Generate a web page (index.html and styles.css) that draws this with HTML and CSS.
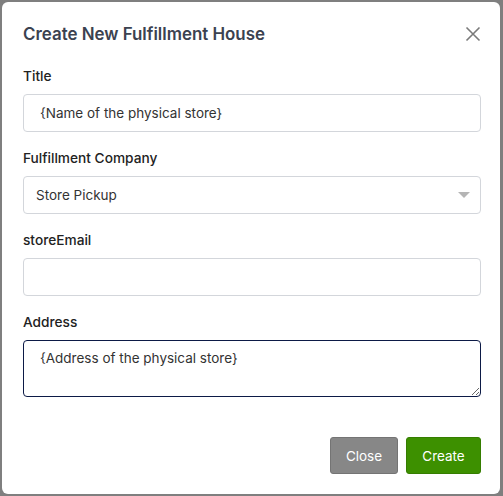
FILE: index.html
```html
<!DOCTYPE html>
<html>
<head>
<meta charset="utf-8">
<link rel="stylesheet" href="styles.css">
</head>
<body>
<div class="modal">
  <div class="header">
    <h1 class="title">Create New Fulfillment House</h1>
    <span class="close-x" aria-label="Close">
      <svg width="16" height="16" viewBox="0 0 16 16"><path d="M1.5 1.5 L14.5 14.5 M14.5 1.5 L1.5 14.5" stroke="#7a7a7a" stroke-width="1.6" fill="none"/></svg>
    </span>
  </div>
  <div class="body">
    <label class="label">Title</label>
    <div class="input">{Name of the physical store}</div>
    <label class="label">Fulfillment Company</label>
    <div class="input select"><span>Store Pickup</span><span class="caret"></span></div>
    <label class="label">storeEmail</label>
    <div class="input"></div>
    <label class="label">Address</label>
    <textarea class="textarea">{Address of the physical store}</textarea>
  </div>
  <div class="footer">
    <button class="btn btn-close">Close</button>
    <button class="btn btn-create">Create</button>
  </div>
</div>
</body>
</html>
```
FILE: styles.css
```css
html, body {
  margin: 0;
  padding: 0;
}
body {
  background: #7f7f7f;
  width: 503px;
  height: 496px;
  overflow: hidden;
  font-family: "Inter", "Open Sans", sans-serif;
}
.modal {
  margin: 2px 3px 0 2px;
  width: 498px;
  height: 492px;
  background: #fff;
  border-radius: 6px;
  box-sizing: border-box;
  padding: 0 19px 0 21px;
  display: flex;
  flex-direction: column;
}
.header {
  display: flex;
  justify-content: space-between;
  align-items: center;
  padding-top: 20px;
  height: 24px;
}
.title {
  margin: 0;
  font-size: 16.9px;
  line-height: 24px;
  font-weight: 600;
  color: #3b4250;
  letter-spacing: 0;
}
.close-x {
  display: flex;
  margin-right: 0;
}
.body {
  display: flex;
  flex-direction: column;
  padding-top: 21px;
}
.label {
  font-size: 13.7px;
  line-height: 18px;
  font-weight: 500;
  color: #222;
  margin-bottom: 9px;
}
.input {
  height: 38px;
  box-sizing: border-box;
  border: 1px solid #d3d6db;
  border-radius: 4px;
  padding: 0 16px;
  font-size: 13.5px;
  color: #333;
  display: flex;
  align-items: center;
  margin-bottom: 17px;
}
.select {
  justify-content: space-between;
  padding: 0 10px 0 12px;
}
.caret {
  width: 0;
  height: 0;
  border-left: 6px solid transparent;
  border-right: 6px solid transparent;
  border-top: 6px solid #b5b5b5;
}
.textarea {
  height: 57px;
  box-sizing: border-box;
  border: 1px solid #0c1a46;
  border-radius: 4px;
  padding: 9px 16px 7px;
  font-family: "Inter", "Open Sans", sans-serif;
  font-size: 13.5px;
  color: #333;
  outline: none;
  margin: 0;
}
.footer {
  display: flex;
  justify-content: flex-end;
  gap: 8px;
  margin-top: 40px;
}
.btn {
  height: 37px;
  border: none;
  border-radius: 3px;
  color: #fff;
  font-family: "Inter", "Open Sans", sans-serif;
  font-size: 13.5px;
  padding: 0;
}
.btn-close {
  width: 68px;
  background: #878787;
  border: 1px solid #747474;
}
.btn-create {
  width: 75px;
  background: #3d9000;
  border: 1px solid #357d00;
}
```
